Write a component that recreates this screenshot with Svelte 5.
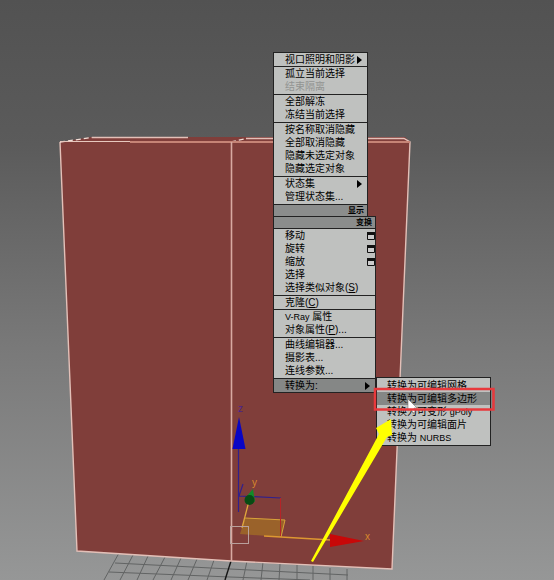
<script>
  const display = [
    [{ text: '视口照明和阴影', arrow: true }],
    [{ text: '孤立当前选择' }, { text: '结束隔离', disabled: true }],
    [{ text: '全部解冻' }, { text: '冻结当前选择' }],
    [{ text: '按名称取消隐藏' }, { text: '全部取消隐藏' }, { text: '隐藏未选定对象' }, { text: '隐藏选定对象' }],
    [{ text: '状态集', arrow: true }, { text: '管理状态集...' }]
  ];
  const transform = [
    [{ text: '移动', box: true }, { text: '旋转', box: true }, { text: '缩放', box: true }, { text: '选择' }, { text: '选择类似对象', key: 'S' }],
    [{ text: '克隆', key: 'C' }],
    [{ latin: 'V-Ray', text: ' 属性' }, { text: '对象属性', key: 'P', after: '...' }],
    [{ text: '曲线编辑器...' }, { text: '摄影表...' }, { text: '连线参数...' }],
    [{ text: '转换为:', arrow: true, active: true }]
  ];
  const convert = [[
    { text: '转换为可编辑网格' },
    { text: '转换为可编辑多边形', active: true },
    { text: '转换为可变形 ', tail: 'gPoly' },
    { text: '转换为可编辑面片' },
    { text: '转换为 ', tail: 'NURBS' }
  ]];
</script>

{#snippet groups(list)}
  {#each list as group}
    <div class="group" class:many={group.length > 1}>
      {#each group as item}
        <button type="button" class="item" class:active={item.active} disabled={item.disabled}>
          <span>{#if item.latin}<small>{item.latin}</small>{/if}{item.text}{#if item.tail}<small>{item.tail}</small>{/if}{#if item.key}(<u>{item.key}</u>){/if}{item.after ?? ''}</span>
          {#if item.arrow}
            <svg class="mark" width="5" height="8" viewBox="0 0 5 8" aria-hidden="true"><path d="M0 0L5 4L0 8Z" fill="#000" /></svg>
          {:else if item.box}
            <svg class="mark option" width="8" height="8" viewBox="0 0 8 8" aria-hidden="true"><path d="M.5 .5H7.5V7.5H.5Z" fill="#ccc" stroke="#111" /><path d="M0 0H8V3H0Z" fill="#111" /></svg>
          {/if}
        </button>
      {/each}
    </div>
  {/each}
{/snippet}

<main>
  <svg class="scene" width="554" height="580" viewBox="0 0 554 580" aria-hidden="true">
    <g fill="none" stroke="#626464" stroke-width="1">
      <path d="M119 553L104 580M133 555L120 580M148 556L137 580M165 557L153 580M181 558L171 580M197 559L188 580M214 560L207 580M247 561L243 580M263 562L261 580M280 564L279 580M297 565V580M313 566V580M330 568V580M347 569V580" />
      <path d="M115 563L230 569L348 575M109 572L230 577L310 580" />
    </g>
    <path d="M231 561L225 580" stroke="#151515" stroke-width="1.4" fill="none" />
    <path d="M60 142L92 137H405L410 142L392 569L231 561L77 551Z" fill="#803e3a" />
    <path d="M92 137.500H188M246 138.500H404L410 142L392 569L231 561L77 551L60 142" fill="none" stroke="#e3c0b8" stroke-width="1.4" />
    <path d="M60 142L92 137.500M231 142L246 138.500" stroke="#f0ddd6" stroke-width="1.3" stroke-dasharray="5 3" fill="none" />
    <path d="M60 141.500H130" stroke="#e7c8be" fill="none" />
    <path d="M130 142H410" stroke="#c68476" stroke-width="2" fill="none" />
    <path d="M231.500 142V561" stroke="#d8aaa2" stroke-width="1.6" fill="none" />

    <path d="M245 518L285 520L281 537L240 534Z" fill="#9a622a" />
    <path d="M245 518L285 520L281 537" fill="none" stroke="#d9a33a" />
    <path d="M249 501L242 528" fill="none" stroke="#e0a83c" stroke-width="1.3" />
    <path d="M238.500 449V512M243 484L239 496L281 498" fill="none" stroke="#31208c" stroke-width="1.200" />
    <path d="M280.500 498V536" stroke="#b52428" fill="none" />
    <path d="M239 417L245.500 449H232.500Z" fill="#0905c5" />
    <path d="M253 489L255 502L246 497Z" fill="#118b29" />
    <circle cx="249.500" cy="500" r="5" fill="#084c14" />
    <path d="M264 536L331 540" stroke="#dd9831" stroke-width="1.300" fill="none" />
    <path d="M330 534L364 541L330 547Z" fill="#c80808" />
    <rect x="230.500" y="526.500" width="18" height="17" fill="none" stroke="#b9a09c" />
    <g font-family="Liberation Sans, sans-serif" font-size="10">
      <text x="238" y="412" fill="#4a238a">z</text>
      <text x="252" y="486" fill="#d8892c">y</text>
      <text x="365" y="540" fill="#d8892c">x</text>
    </g>
  </svg>

  <div class="quad">
    <section class="menu display">
      {@render groups(display)}
      <h2>显示</h2>
    </section>
    <section class="menu transform">
      <h2>变换</h2>
      {@render groups(transform)}
    </section>
  </div>
  <section class="menu convert">
    {@render groups(convert)}
  </section>

  <svg class="notes" width="554" height="580" viewBox="0 0 554 580" aria-hidden="true">
    <path d="M408 399V411L411 409L413 413L415 412L414 408H417Z" fill="#fff" stroke="#666" stroke-width=".5" />
    <rect x="375" y="389" width="118.500" height="20.500" fill="none" stroke="#e8393c" stroke-width="2.500" />
    <path d="M311 561L379 434L376 428L391 419L392 435L387 437L313 562Z" fill="#ffff00" />
  </svg>
</main>

<style>
  :global(body) {
    margin: 0;
  }
  main {
    position: relative;
    min-height: 100vh;
    overflow: hidden;
    background: linear-gradient(#525252, #5b5b5b 25%, #797979 60%, #969797);
    font: 10px/13px "Liberation Sans", "Noto Sans CJK SC", sans-serif;
    color: #000;
  }
  .scene {
    display: block;
  }
  .notes {
    position: absolute;
    top: 0;
    left: 0;
    pointer-events: none;
  }
  .quad {
    position: absolute;
    top: 52px;
    left: 273px;
    display: flex;
    flex-direction: column;
    align-items: flex-start;
  }
  .menu {
    box-sizing: border-box;
    border: 1px solid #222;
    background: #bfc1bf;
  }
  .display {
    width: 95px;
    border-bottom: 0;
  }
  .transform {
    width: 103px;
  }
  .convert {
    position: absolute;
    top: 377px;
    left: 376px;
    width: 115px;
  }
  .group + .group,
  .group + h2,
  h2 + .group {
    border-top: 1px solid #222;
  }
  .many {
    padding-bottom: 1px;
  }
  .convert .group {
    padding: 1px 0;
  }
  h2 {
    margin: 0;
    padding-right: 3px;
    background: #8b8d8c;
    font-size: 8px;
    line-height: 11px;
    font-weight: 700;
    text-align: right;
  }
  .item {
    display: flex;
    align-items: center;
    justify-content: space-between;
    width: 100%;
    height: 13px;
    padding: 0 5px 0 11px;
    border: 0;
    background: none;
    color: inherit;
    font: inherit;
    text-align: left;
    white-space: nowrap;
  }
  .convert .item {
    padding-left: 10px;
  }
  .item:disabled {
    color: #929492;
  }
  .item.active {
    background: #858786;
  }
  .mark {
    flex: none;
  }
  .option {
    margin-right: -5px;
  }
  small {
    font-size: 9px;
  }
</style>
